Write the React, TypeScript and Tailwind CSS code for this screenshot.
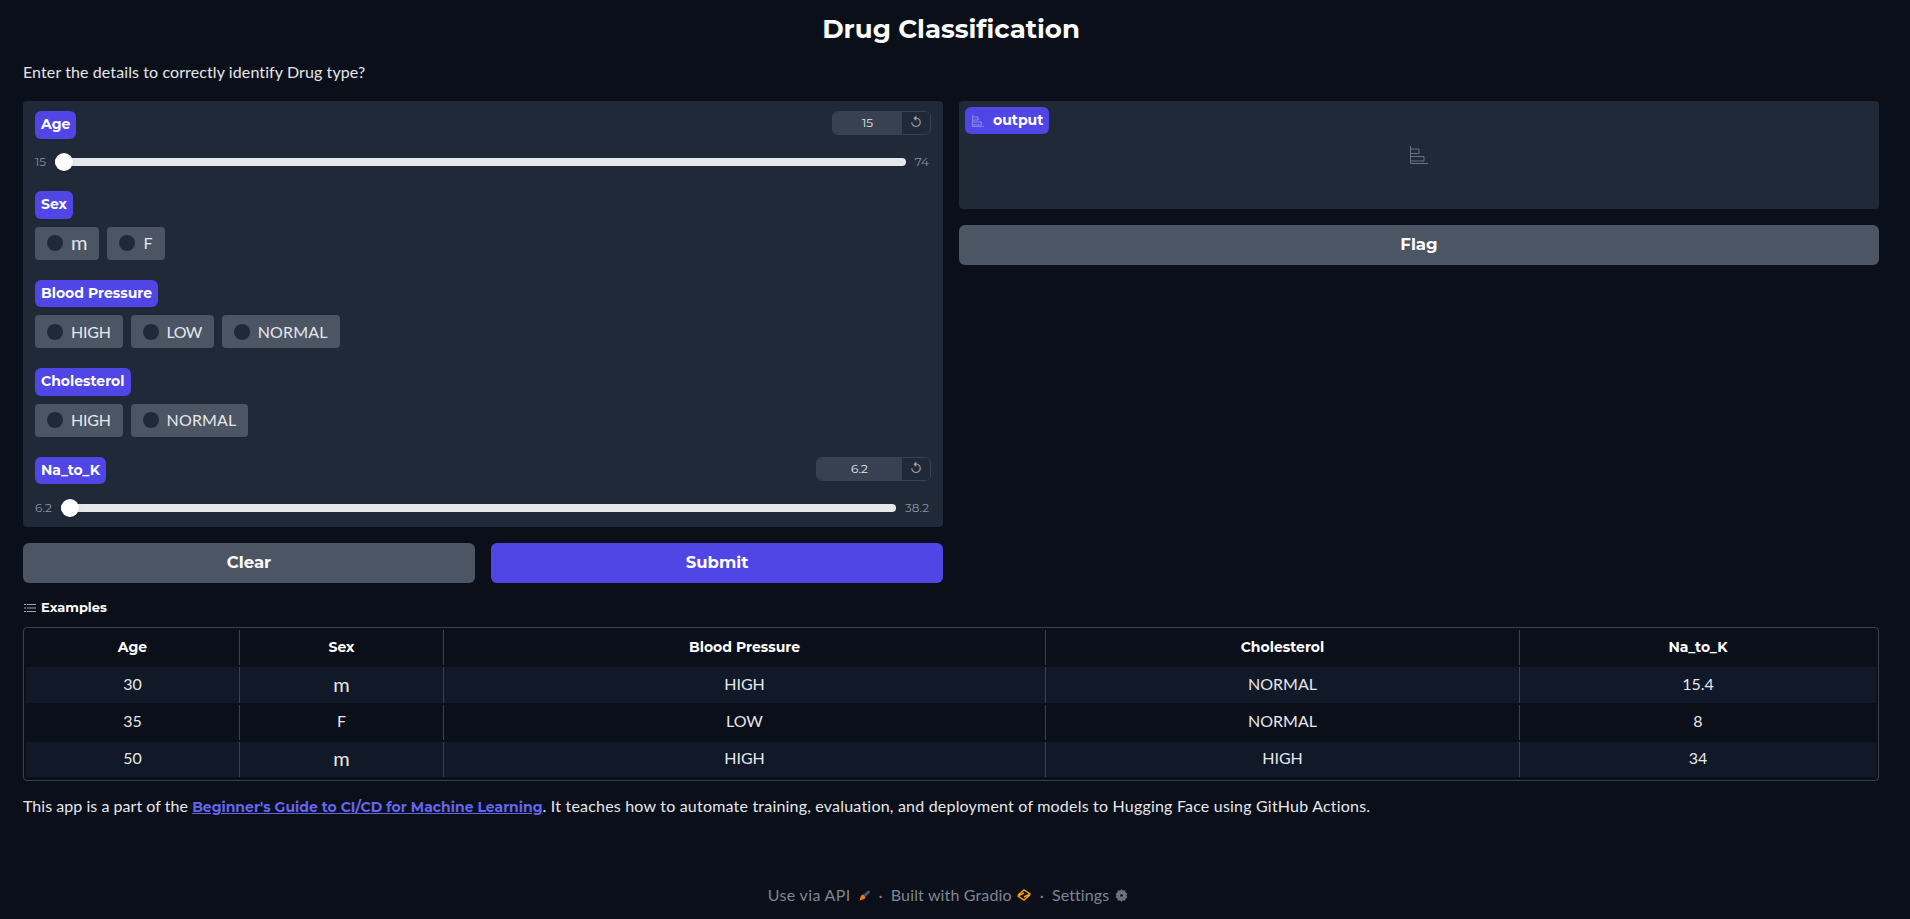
import React from "react";

const bold = "font-['Montserrat','Inter',sans-serif]";

function BarIcon({ className }: { className: string }) {
  return (
    <svg viewBox="0 0 18 18" fill="none" stroke="currentColor" strokeWidth="1" className={className}>
      <path d="M.5 0v17.500H18M1 3h8v4.500H1M1 10.500h13V15H1" />
    </svg>
  );
}

function Tag({ children }: { children: React.ReactNode }) {
  return (
    <div className={`inline-flex h-[27.5px] items-center rounded-[6px] bg-[#4f46e5] px-[6px] text-[14px] font-bold text-white ${bold}`}>
      {children}
    </div>
  );
}

function radioLabel(t: string) {
  if (t === "m") return "pb-[3px] text-[20px] leading-[20px]";
  if (t === "LOW") return "tracking-[-0.6px]";
  if (t === "HIGH") return "tracking-[-0.25px]";
  if (t === "NORMAL") return "tracking-[0.15px]";
  return "";
}

function Radios({ items }: { items: string[] }) {
  return (
    <div className="mt-2 flex gap-2">
      {items.map((t) => (
        <div key={t} className="flex h-[33px] items-center gap-2 rounded-[4px] bg-[#4b5563] px-3 text-[16px] text-[#e5e7eb]">
          <span className="h-4 w-4 rounded-full bg-[#1f2937]" />
          <span className={radioLabel(t)}>{t}</span>
        </div>
      ))}
    </div>
  );
}

function Slider({ label, value, min, max, inputW }: { label: string; value: string; min: string; max: string; inputW: string }) {
  return (
    <div>
      <div className="flex items-start justify-between">
        <Tag>{label}</Tag>
        <div className={`flex h-6 overflow-hidden rounded-[6px] border border-[#374151] text-[12px] text-[#e5e7eb] ${bold} ${inputW}`}>
          <div className="flex flex-1 items-center justify-center bg-[#374151]">{value}</div>
          <div className="flex w-[28px] items-center justify-center bg-[#1f2937] text-[13px] text-[#9ca3af]">↺</div>
        </div>
      </div>
      <div className={`mt-[14.5px] flex items-center gap-[9px] pr-[2px] text-[12px] text-[#8a93a1] ${bold}`}>
        <span>{min}</span>
        <div className="relative h-2 flex-1 rounded-full bg-[#e5e7eb]">
          <span className="absolute left-0 top-[-5px] h-[18px] w-[18px] rounded-full bg-white shadow" />
        </div>
        <span>{max}</span>
      </div>
    </div>
  );
}

const rows = [
  ["30", "m", "HIGH", "NORMAL", "15.4"],
  ["35", "F", "LOW", "NORMAL", "8"],
  ["50", "m", "HIGH", "HIGH", "34"],
];
const heads = ["Age", "Sex", "Blood Pressure", "Cholesterol", "Na_to_K"];
const cols = "grid grid-cols-[214px_204px_602px_474px_1fr]";

export default function App() {
  return (
    <div className="flex min-h-[919px] flex-col bg-[#0b0f19] font-['Lato',sans-serif] text-[#e5e7eb]">
      <main className="flex-1 pl-[23px] pr-[31px]">
        <h1 className={`pt-[13px] text-center text-[26px] font-bold leading-[32px] text-white ${bold}`}>Drug Classification</h1>
        <p className="mt-[15px] text-[16px] leading-[24px] tracking-[0.1px]">Enter the details to correctly identify Drug type?</p>
        <div className="mt-[17px] grid grid-cols-2 gap-4">
          <div className="flex flex-col gap-4">
            <div className="flex h-[426px] flex-col gap-5 rounded-[4px] bg-[#1f2937] px-3 pt-[10px]">
              <Slider label="Age" value="15" min="15" max="74" inputW="w-[99px]" />
              <div><Tag>Sex</Tag><Radios items={["m", "F"]} /></div>
              <div><Tag>Blood Pressure</Tag><Radios items={["HIGH", "LOW", "NORMAL"]} /></div>
              <div><Tag>Cholesterol</Tag><Radios items={["HIGH", "NORMAL"]} /></div>
              <Slider label="Na_to_K" value="6.2" min="6.2" max="38.2" inputW="w-[115px]" />
            </div>
            <div className="grid grid-cols-2 gap-4">
              <button className={`h-10 rounded-[6px] bg-[#4b5563] pb-[2px] text-[16.5px] font-bold text-white ${bold}`}>Clear</button>
              <button className={`h-10 rounded-[6px] bg-[#4f46e5] pb-[2px] text-[16.5px] font-bold text-white ${bold}`}>Submit</button>
            </div>
          </div>
          <div className="flex flex-col gap-4">
            <div className="relative flex h-[108px] items-center justify-center rounded-[4px] bg-[#1f2937]">
              <div className={`absolute left-[6px] top-[6px] flex h-[27px] items-center gap-[9px] rounded-[6px] bg-[#4f46e5] pl-[7px] pr-[6px] text-[14px] font-bold text-white ${bold}`}>
                <BarIcon className="h-3 w-3 text-[#a5b4fc]" />
                output
              </div>
              <BarIcon className="h-[18px] w-[18px] text-[#6b7280]" />
            </div>
            <button className={`h-10 rounded-[6px] bg-[#4b5563] pb-[2px] text-[16.5px] font-bold text-white ${bold}`}>Flag</button>
          </div>
        </div>
        <div className="mt-[15px] flex h-5 items-center gap-[5px] pl-[1px] text-white">
          <svg viewBox="0 0 12 12" className="h-3 w-3 text-[#9ca3af]" stroke="currentColor" strokeWidth="1"><path d="M3 2.500h9M3 6h9M3 9.500h9M0 2.500h2M0 6h2M0 9.500h2" /></svg>
          <span className={`text-[13px] font-bold ${bold}`}>Examples</span>
        </div>
        <div className="mt-[9px] h-[154px] overflow-hidden rounded-[4px] border border-[#374151] px-[2px] pt-[2px]">
          <div className="h-[37.33px] pb-[2px]">
            <div className={`${cols} h-full text-center text-[14px] font-bold text-white ${bold}`}>
              {heads.map((h) => (
                <div key={h} className="flex h-full items-center justify-center border-r border-[#374151] pb-[1px] last:border-r-0">{h}</div>
              ))}
            </div>
          </div>
          {rows.map((r, i) => (
            <div key={i} className="h-[37.33px] pb-[2px]">
              <div className={`${cols} h-full text-center text-[16px] ${i % 2 === 0 ? "bg-[#111827]" : ""}`}>
                {r.map((c, j) => (
                  <div key={j} className={`flex h-full items-center justify-center border-r border-[#374151] last:border-r-0 ${i === 2 ? "pb-[4px]" : "pb-[2px]"}`}>
                    <span className={c === "m" ? "text-[20px]" : ""}>{c}</span>
                  </div>
                ))}
              </div>
            </div>
          ))}
        </div>
        <p className="mt-[13px] text-[16px] leading-[24px]">
          <span className="tracking-[0.04px]">This app is a part of the </span><a className={`text-[14px] font-bold text-[#6366f1] underline ${bold}`}>Beginner's Guide to CI/CD for Machine Learning</a><span className="tracking-[0.2px]">. It teaches how to automate training, evaluation, and deployment of models to Hugging Face using GitHub Actions.</span>
        </p>
      </main>
      <footer className="flex h-[48px] items-center justify-center pr-[14px] text-[16px] text-[#7d8694]">
        <span className="tracking-[0.35px]">Use via API</span>
        <svg viewBox="0 0 12 12" className="ml-[8px] h-3 w-3"><path d="M.5 11.500l1.500-5 2.500-1 2 2.500-1 2z" fill="#f97316" /><path d="M4.500 5.500L9 1.500l2 .5-.5 2-4.500 4z" fill="#4b5563" /></svg>
        <span className="ml-[8px]">·</span>
        <span className="ml-[8px] tracking-[0.15px]">Built with Gradio</span>
        <svg viewBox="0 0 14 12" fill="none" stroke="#f59e0b" strokeWidth="1.500" className="ml-[5px] h-3 w-[14px]"><path d="M1 6l6-5 6 4-6 3M13 6l-6 5-6-4 6-3" /></svg>
        <span className="ml-[9px]">·</span>
        <span className="ml-[8px] tracking-[0.1px]">Settings</span>
        <svg viewBox="0 0 12 12" className="ml-[6px] h-[13px] w-[13px]"><path d="M6 0l1.300 1.600 2-.4.500 2 1.700 1.200L10.600 6l.9 1.600-1.700 1.200-.5 2-2-.4L6 12l-1.300-1.600-2 .4-.5-2L.500 7.600 1.400 6 .5 4.400l1.700-1.200.5-2 2 .4z" fill="#6b7280" /><circle cx="6" cy="6" r="1.200" fill="#0b0f19" /></svg>
      </footer>
    </div>
  );
}
